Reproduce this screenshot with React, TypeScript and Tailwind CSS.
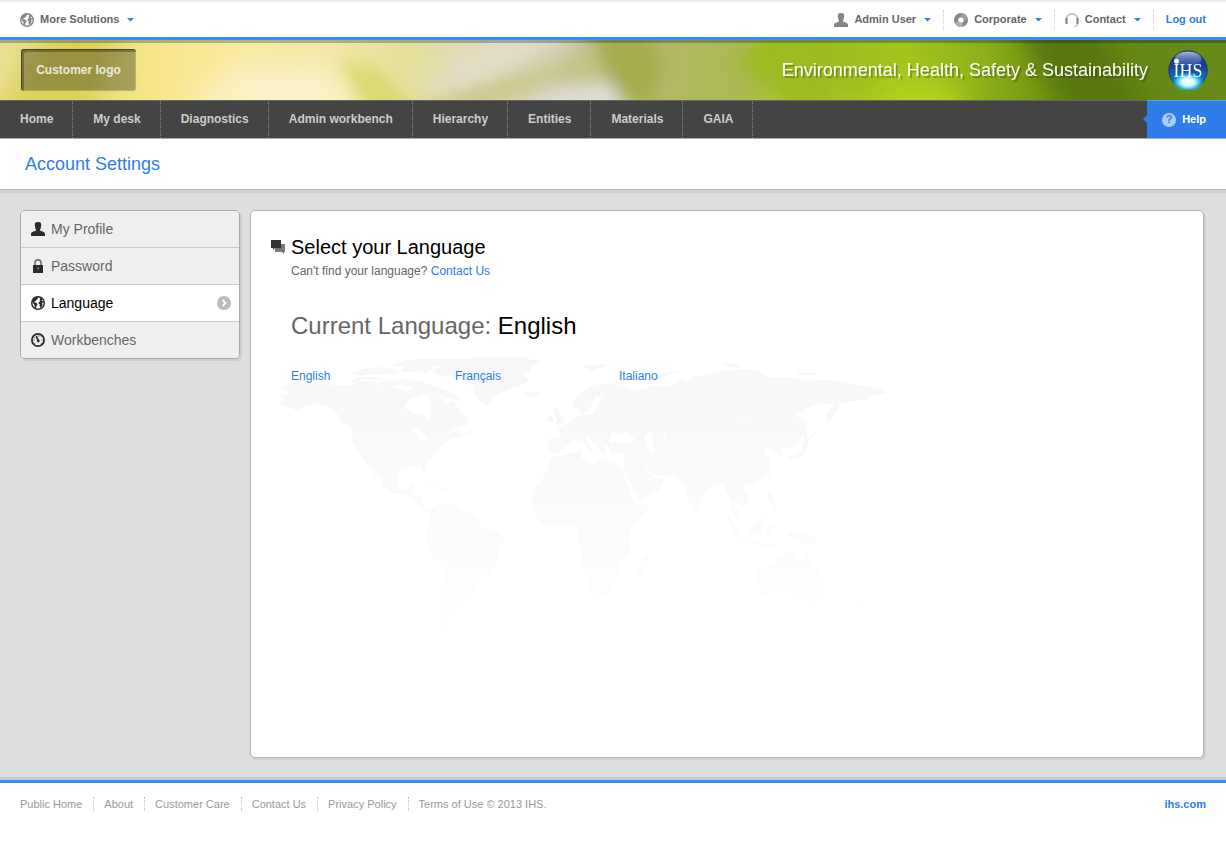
import type { ReactNode } from "react";

const NAV_ITEMS = [
  "Home",
  "My desk",
  "Diagnostics",
  "Admin workbench",
  "Hierarchy",
  "Entities",
  "Materials",
  "GAIA",
] as const;

const FOOTER_LINKS = ["Public Home", "About", "Customer Care", "Contact Us", "Privacy Policy"] as const;

const LANGUAGES = ["English", "Français", "Italiano"] as const;

function UserIcon() {
  return (
    <svg viewBox="0 0 14 14" className="size-3.5 shrink-0" fill="currentColor" aria-hidden="true">
      <path d="M4.300.7C4.900.2 5.800 0 7 0s2.100.2 2.700.7c.4.7.6 1.500.5 2.500l-.3 2C9.700 6.400 9.300 7.200 9 7.800v.8l3.800 1.500c.7.4 1.100 1 1.200 1.700V14H0v-2.200c.1-.7.5-1.300 1.200-1.700L5 8.600v-.8c-.3-.6-.7-1.400-.9-2.600l-.3-2c-.1-1 .1-1.800.5-2.500z" />
    </svg>
  );
}

function GlobeIcon() {
  return (
    <svg viewBox="0 0 14 14" className="size-3.5 shrink-0" aria-hidden="true">
      <circle cx="7" cy="7" r="6.300" fill="none" stroke="currentColor" strokeWidth="1.400" />
      <path
        fill="currentColor"
        d="M2.500 2L5.500.8l1.800.1-.9 1.300.7.800-1.700.8L4.600 5l-1.300.5.200 1 1.800.2 1.300 1.200-.6 1.500-.7.800-.1 2.400-1.600-1L3.500 9 2 7.300 1 5.600zM8 .8l2.600.6 2.300 2.400-1.600-.3-.8 1.200 1.100.5 1.500-.2.100 2-1.100-.7-1 .7.500 1.700-1.200 2.500-1 .8-.8-2 .2-1.400L7.500 7.500l.3-1.600L9.300 5l-.8-1.200.9-1z"
      />
    </svg>
  );
}

function LockIcon() {
  return (
    <svg viewBox="0 0 14 14" className="size-3.5 shrink-0" aria-hidden="true">
      <path d="M4 6.500V3.800a3 3 0 0 1 6 0v2.700" fill="none" stroke="#777" strokeWidth="1.700" />
      <path fill="currentColor" d="M2 6h10v8H2z" />
      <path fill="#aaa" d="M6.400 8.500h1.300v1.800H6.400z" />
    </svg>
  );
}

function GaugeIcon() {
  return (
    <svg viewBox="0 0 14 14" className="size-3.5 shrink-0" fill="none" stroke="currentColor" aria-hidden="true">
      <circle cx="7" cy="7" r="6.100" strokeWidth="1.800" />
      <path d="M5.300 3.200l2 4.600" strokeWidth="1.700" />
      <circle cx="7.300" cy="8" r="1.400" fill="currentColor" stroke="none" />
      <path d="M2.600 7h1.200M10.300 7h1.200M7.800 2.300v1.200M9.600 4.300l.7-.7M3.400 4.200l.7.600M10 10l.8.6M3.400 10.500l.8-.6" strokeWidth="0.900" />
    </svg>
  );
}

function DonutIcon() {
  return (
    <svg viewBox="0 0 14 14" className="size-3.5 shrink-0" fill="none" strokeWidth="4.200" aria-hidden="true">
      <circle cx="7" cy="7" r="4.900" stroke="#888" />
      <path d="M7 2.100A4.900 4.900 0 0 1 11.900 7" stroke="#a0a0a0" />
      <path d="M2.500 9A4.900 4.900 0 0 0 8.500 11.700" stroke="#b0b0b0" />
    </svg>
  );
}

function HeadsetIcon() {
  return (
    <svg viewBox="0 0 14 14" className="size-3.5 shrink-0" fill="none" aria-hidden="true">
      <path d="M1.300 7V6.500a5.700 5.700 0 0 1 11.400 0V7" stroke="#bdbdbd" strokeWidth="1.500" />
      <path d="M1.500 5v6M12.500 5v6" stroke="#858585" strokeWidth="2.200" />
      <path d="M12.500 11l-1 2.200h-2" stroke="#bdbdbd" strokeWidth="1.200" />
    </svg>
  );
}

function ChatIcon() {
  return (
    <svg viewBox="0 0 14 14" className="size-3.5 shrink-0" aria-hidden="true">
      <path fill="#777" d="M4 4h10v8h-1v2l-2.200-2H4z" />
      <path fill="#333" d="M0 0h10v8H4L2 10V8H0z" />
    </svg>
  );
}

function Caret() {
  return (
    <svg viewBox="0 0 7 4" className="h-1 w-[7px] shrink-0 fill-[#2f7de9]" aria-hidden="true">
      <path d="M0 0h7L3.500 3.500z" />
    </svg>
  );
}

/** Round corporate mark at the right end of the banner. */
function BrandLogo() {
  return (
    <svg viewBox="0 0 40 40" className="size-10 shrink-0" role="img" aria-label="IHS">
      <defs>
        <linearGradient id="orb" x1="0" y1="0" x2="0" y2="1">
          <stop offset="0" stopColor="#232d72" />
          <stop offset="0.4" stopColor="#1c3f9c" />
          <stop offset="0.65" stopColor="#0a68bc" />
          <stop offset="1" stopColor="#0c8ed2" />
        </linearGradient>
        <radialGradient id="orbGlow" cx="0.5" cy="0.5" r="0.5">
          <stop offset="0" stopColor="#fff" />
          <stop offset="0.4" stopColor="#d8faff" />
          <stop offset="0.7" stopColor="#4fd2f8" stopOpacity="0.8" />
          <stop offset="1" stopColor="#1aa6ea" stopOpacity="0" />
        </radialGradient>
        <linearGradient id="orbShine" x1="0" y1="0" x2="0" y2="1">
          <stop offset="0" stopColor="#e8f0ff" stopOpacity="0.7" />
          <stop offset="1" stopColor="#5a8be0" stopOpacity="0.2" />
        </linearGradient>
      </defs>
      <circle cx="20" cy="20" r="19.200" fill="url(#orb)" stroke="#1c2c66" strokeWidth="0.800" />
      <ellipse cx="20" cy="32" rx="16" ry="10" fill="url(#orbGlow)" />
      <ellipse cx="20" cy="9" rx="13.500" ry="7.500" fill="url(#orbShine)" />
      <circle cx="8.500" cy="11.200" r="2.500" fill="#fff" />
      <text x="5.500" y="26.500" fill="#fff" fontSize="18" fontFamily="'Liberation Serif', serif">
        IHS
      </text>
    </svg>
  );
}

/** Soft out-of-focus foliage stretched across the banner. */
function BannerArt() {
  return (
    <svg
      viewBox="0 0 1226 60"
      preserveAspectRatio="none"
      className="absolute inset-0 h-full w-full"
      aria-hidden="true"
    >
      <defs>
        <linearGradient id="leaf">
          <stop offset="0" stopColor="#e9df94" />
          <stop offset="0.06" stopColor="#e6db74" />
          <stop offset="0.13" stopColor="#f6e78c" />
          <stop offset="0.2" stopColor="#f9eb9f" />
          <stop offset="0.27" stopColor="#f2e7a8" />
          <stop offset="0.33" stopColor="#e5df9a" />
          <stop offset="0.38" stopColor="#dfdab0" />
          <stop offset="0.45" stopColor="#d3cfb0" />
          <stop offset="0.5" stopColor="#b5b77a" />
          <stop offset="0.55" stopColor="#b2b862" />
          <stop offset="0.61" stopColor="#abb950" />
          <stop offset="0.66" stopColor="#9dbb20" />
          <stop offset="0.74" stopColor="#a3c41d" />
          <stop offset="0.8" stopColor="#8db01a" />
          <stop offset="0.88" stopColor="#658913" />
          <stop offset="1" stopColor="#678b18" />
        </linearGradient>
        <filter id="haze" x="-5%" y="-100%" width="110%" height="300%">
          <feGaussianBlur stdDeviation="14" />
        </filter>
        <filter id="mist" x="-5%" y="-100%" width="110%" height="300%">
          <feGaussianBlur stdDeviation="8" />
        </filter>
      </defs>
      <rect width="1226" height="60" fill="url(#leaf)" />
      <g filter="url(#haze)">
        <path d="M60-20h60L90 80H-10z" fill="#dcd058" />
        <path d="M180 70l60-45h90l40 55z" fill="#fcf0c8" />
        <path d="M510-20h75L470 55l-60 5z" fill="#e4ddca" />
        <path d="M750 90l20-30h70l20 30z" fill="#c3ce3c" />
        <path d="M840 90l60-50h50l20 50z" fill="#b2d41c" />
        <path d="M1005-40h75l80 130h-80l-40-60z" fill="#567710" />
      </g>
      <g filter="url(#mist)">
        <path d="M340 20l36 8 40 42h-50z" fill="#d6d664" opacity="0.800" />
        <path d="M596 12l14 20-70 14-60 24h-70l60-22 70-18z" fill="#c4c27e" opacity="0.700" />
        <path d="M500 85l50-35 55-10 60 45z" fill="#dedbd2" />
        <path d="M588-30h50l24 55-16 50-20-5-26-50z" fill="#a1a940" opacity="0.750" />
        <path d="M736 25l56-60h40v110h-40l-24-34z" fill="#9dbb20" />
      </g>
    </svg>
  );
}

function WorldMap() {
  return (
    <svg
      viewBox="0 0 1980 930"
      className="pointer-events-none absolute left-[9px] top-[129px] w-[660px]"
      fill="url(#fade)"
      aria-hidden="true"
    >
      <defs>
        <linearGradient id="fade" gradientUnits="userSpaceOnUse" x1="0" y1="50" x2="0" y2="930">
          <stop offset="0" stopColor="#f7f7f7" />
          <stop offset="0.25" stopColor="#f8f8f8" />
          <stop offset="0.6" stopColor="#fbfbfb" />
          <stop offset="1" stopColor="#fff" />
        </linearGradient>
      </defs>
      {/* North America */}
      <path d="M62 142L100 128 160 132 270 136 300 126 360 146 400 140 440 154 470 132 496 152 510 136 540 150 520 170 486 162 440 184 432 204 470 222 498 228 504 246 510 222 514 190 502 172 530 166 560 190 580 180 602 214 626 240 618 258 586 262 560 280 600 270 606 282 640 272 600 294 572 296 548 316 526 340 516 356 496 376 500 408 486 392 480 378 452 376 424 384 412 400 414 436 428 450 444 446 450 434 466 432 456 460 484 468 486 494 506 508 512 514 498 516 466 486 430 466 400 460 372 440 366 422 346 396 330 374 352 418 344 412 318 370 304 348 286 326 276 304 276 270 246 246 230 220 210 202 160 192 130 200 50 240 110 208 70 198 56 186 80 178 66 168 92 160z" />
      {/* Arctic islands */}
      <path d="M270 124L300 112 350 110 390 124 440 116 490 126 540 144 590 164 602 180 560 176 520 158 480 140 420 134 370 144 310 136zM272 100L320 84 370 82 420 92 400 104 330 104 290 106zM390 76L440 60 510 55 600 56 570 72 520 82 500 98 420 96 430 80z" />
      <path fill="#fff" d="M300 116l50 4 40-6-30 10-50 2zM440 108l60-4 40 14-50 0z" />
      {/* Greenland and Iceland */}
      <path d="M520 92L570 68 600 56 700 50 790 54 848 64 806 78 812 92 790 106 806 118 790 134 750 146 708 168 684 196 656 182 640 160 638 136 600 112 540 106z" />
      <path d="M786 158l30-2 26 6-12 8-30 2zM478 424l30 2 40 20 26 4-30 0-20-14zM92 430l14 4 14 10-10 0z" />
      {/* South America */}
      <path d="M512 506L534 490 584 492 604 506 648 528 664 560 712 576 732 596 728 618 714 640 710 674 698 700 666 716 644 746 620 780 590 806 576 824 566 850 564 876 574 898 544 898 526 874 532 806 544 734 550 680 520 656 498 600 500 570 514 552z" />
      <path fill="#fff" d="M446 272l22-8 16 8-12 30 4-20 14-2 14 14-8 10-16-2-8-24-10 0z" />
      <g transform="translate(780 0)">
        {/* Europe and Asia */}
        <path d="M156 182L186 156 216 136 256 130 306 134 340 150 320 162 300 164 350 152 400 140 450 142 470 128 474 118 492 114 502 124 520 110 570 102 610 92 680 86 720 96 750 112 810 112 850 122 930 120 990 132 1070 142 1100 158 1050 168 1040 178 964 188 930 242 922 248 920 224 934 200 942 190 882 196 826 226 850 238 856 270 840 304 814 328 790 318 776 328 790 336 780 350 744 324 730 334 750 358 750 390 734 414 700 430 680 432 668 444 686 470 688 486 668 500 652 488 640 478 640 502 658 524 662 550 640 524 630 476 606 430 574 442 542 470 534 508 520 518 502 470 490 430 468 410 424 406 394 404 380 380 376 386 402 412 434 420 420 446 360 484 346 458 322 416 306 390 312 372 316 340 276 340 260 316 282 306 334 310 344 296 314 276 300 284 280 276 268 298 272 314 250 320 256 346 236 330 214 298 192 284 206 314 220 330 206 334 184 300 158 304 130 326 112 342 82 338 84 296 118 296 120 276 104 264 140 252 160 232 190 226 216 222 234 196 238 178 256 170 226 168 216 192 206 214 190 224 176 206 160 208z" />
        <path fill="#fff" d="M272 298l14-18 14 2 4 8 18-8-4 10 22 12-20 4-30-6-14 6zM372 290l14-14 14 4-8 12 8 14 2 26-14 2-10-22zM428 284l12-6-2 14-10 2zM664 248l14-10 12-14-6 16-14 8z" />
        <path d="M100 206l16 0 2 14 18 20-4 10-30 6 10-14-8-16zM76 240l18-16 8 14-10 10zM8 160l40-4 12 8-20 8-26-2zM186 78l80-6-30 12-16 8zM596 68l50 4 20 12-40-2zM826 98l70 2-20 6-40-2zM400 116l30-16 54-8-50 16-20 10z" />
        <path d="M850 232l10 20 4 40 30-16-28 26-12 40-20 12-34 10 6-12 38-20 8-30-2-30zM776 330l10-6 4 24-10 4zM744 410l6-16 6 0-6 22z" />
        {/* Africa and Madagascar */}
        <path d="M96 350l80-14 8 0 4 22 34 14 10-14 36 10 32 4 8 30 20 40 18 52 44-4-14 28-44 46-4 22 4 50-12 16-20 28-6 36-14 28-20 26-38 4-10-4-16-60-14-30 6-50-14-26-2-34-24-14-40 2-30 4-16-12-14-26-12-12-4-20 6-36 16-24 22-30z" />
        <path d="M384 640l2 20-16 54-16-2-2-20 8-30z" />
        {/* South-east Asia and Oceania */}
        <path d="M612 522l20 16 30 40 6 22-14-8-24-40zM670 600l50 6 58 12-8 6-60-8zM688 558l20-10 24-22-2 34-14 24-24-4zM740 560l30-6-14 14 6 28-8-8-8 10zM744 456l12 2 0 22 12 12 4 24-14-2-8-28-8-8zM536 510l6 2 2 12-8 2z" />
        <path d="M800 572l20 2 40 8 24 14 16 22-30-6-26-2-20-14-16-4zM708 700L716 686 756 672 778 648 798 640 826 634 828 654 846 668 854 636 860 634 868 660 888 684 910 712 914 746 896 796 868 796 844 786 834 770 818 772 800 756 770 754 730 770 720 774 714 730zM868 808l16 2-6 14-8-4zM1010 774l24 22-6 12-20 8-6-16zM984 846l36-26-16 18z" />
      </g>
    </svg>
  );
}

type AccountItemProps = { icon: ReactNode; label: string };

function AccountItem({ icon, label }: AccountItemProps) {
  return (
    <button type="button" className="flex items-center gap-1.5 text-[#666]">
      <span className="flex text-[#858585]">{icon}</span>
      {label}
      <span className="ml-0.5">
        <Caret />
      </span>
    </button>
  );
}

type SideLinkProps = { icon: ReactNode; label: string; active?: boolean };

function SideLink({ icon, label, active }: SideLinkProps) {
  return (
    <li className="border-b border-[#c9c9c9] last:border-b-0">
      <a
        href="#"
        aria-current={active ? "page" : undefined}
        className={
          active
            ? "flex h-9 items-center gap-1.5 bg-white pl-2.5 pr-2 text-black"
            : "flex h-9 items-center gap-1.5 bg-[#efefef] pl-2.5 pr-2 text-[#666]"
        }
      >
        <span className="flex text-[#2b2b2b]">{icon}</span>
        <span className="grow">{label}</span>
        {active && (
          <svg viewBox="0 0 14 14" className="size-3.5" aria-hidden="true">
            <circle cx="7" cy="7" r="7" fill="#bbb" />
            <path d="M5.500 4l3 3-3 3" fill="none" stroke="#fff" strokeWidth="1.800" />
          </svg>
        )}
      </a>
    </li>
  );
}

export default function App() {
  return (
    <div className="bg-white font-['Liberation_Sans',Arial,sans-serif] text-xs text-[#666]">
      <div className="flex h-10 items-center justify-between border-b-[3px] border-t-2 border-b-[#338fff] border-t-[#ededed] px-5 text-[11px] font-bold">
        <AccountItem icon={<GlobeIcon />} label="More Solutions" />
        <div className="flex items-center">
          <div className="flex h-5 items-center border-r border-dotted border-[#ccc] pr-3">
            <AccountItem icon={<UserIcon />} label="Admin User" />
          </div>
          <div className="flex h-5 items-center border-r border-dotted border-[#ccc] pl-2.5 pr-3">
            <AccountItem icon={<DonutIcon />} label="Corporate" />
          </div>
          <div className="flex h-5 items-center border-r border-dotted border-[#ccc] pl-2.5 pr-3">
            <AccountItem icon={<HeadsetIcon />} label="Contact" />
          </div>
          <a href="#" className="pl-3 text-[#2f7de9]">
            Log out
          </a>
        </div>
      </div>

      <header className="relative flex h-[60px] items-center justify-between overflow-hidden pl-[21px] pr-[18px]">
        <BannerArt />
        <div className="absolute inset-x-0 top-0 h-[3px] bg-black/25" />
        <div className="relative flex h-[42px] w-[115px] items-center justify-center rounded-[3px] bg-black/30 font-bold text-white/80 shadow-[inset_3px_3px_0_rgba(0,0,0,0.25),inset_1px_1px_0_rgba(0,0,0,0.4),inset_-1px_-1px_0_rgba(255,255,255,0.2)]">
          Customer logo
        </div>
        <div className="relative flex items-center gap-5">
          <span className="text-lg text-white [text-shadow:2px_2px_0_rgba(0,0,0,0.25)]">
            Environmental, Health, Safety &amp; Sustainability
          </span>
          <BrandLogo />
        </div>
      </header>

      <nav className="flex h-[39px] justify-between border-b border-t border-b-[#aaa] border-t-[#666] bg-[#444] font-bold text-[#ccc]">
        <ul className="flex">
          {NAV_ITEMS.map((item) => (
            <li key={item} className="border-r border-dotted border-[#888]">
              <a href="#" className="flex h-9 items-center pl-5 pr-[19px]">
                {item}
              </a>
            </li>
          ))}
        </ul>
        <a
          href="#"
          className="relative -mt-px flex items-center gap-1.5 border-t border-[#5a9bf5] bg-[#2f7de9] pl-[15px] pr-5 text-[11px] text-white"
        >
          <svg viewBox="0 0 4 8" className="absolute -left-1 top-3.5 h-2 w-1 fill-[#2f7de9]" aria-hidden="true">
            <path d="M4 0v8L0 4z" />
          </svg>
          <span className="flex size-3.5 items-center justify-center rounded-full bg-[#accbf6] text-[#2f7de9]">?</span>
          Help
        </a>
      </nav>

      <h1 className="flex h-[51px] items-center border-b border-[#b3b3b3] px-[25px] text-lg text-[#2f7de9]">
        Account Settings
      </h1>

      <main className="flex items-start gap-2.5 border-y-[3px] border-b-[#c9c9c9] border-t-[#d0d0d0] bg-[#dedede] pb-[19px] pl-5 pr-[22px] pt-[17px]">
        <ul className="w-[220px] shrink-0 overflow-hidden rounded-[5px] border border-[#aaa] text-sm shadow-[2px_2px_0_#cecece]">
          <SideLink icon={<UserIcon />} label="My Profile" />
          <SideLink icon={<LockIcon />} label="Password" />
          <SideLink icon={<GlobeIcon />} label="Language" active />
          <SideLink icon={<GaugeIcon />} label="Workbenches" />
        </ul>

        <section className="relative min-h-[548px] grow overflow-hidden rounded-[5px] border border-[#b3b3b3] bg-white px-5 pt-6 shadow-[2px_2px_0_#cecece]">
          <WorldMap />
          <div className="relative">
            <h2 className="flex items-center gap-1.5 text-xl leading-6 text-black">
              <ChatIcon />
              Select your Language
            </h2>
            <div className="pl-5">
              <p className="mt-1 leading-4">
                Can't find your language?{" "}
                <a href="#" className="text-[#2f7de9]">
                  Contact Us
                </a>
              </p>
              <p className="mt-8 text-2xl leading-[30px]">
                Current Language: <strong className="font-normal text-black">English</strong>
              </p>
              <ul className="mt-[27px] flex gap-1">
                {LANGUAGES.map((lang) => (
                  <li key={lang} className="w-40">
                    <a href="#" className="text-[#2f7de9]">
                      {lang}
                    </a>
                  </li>
                ))}
              </ul>
            </div>
          </div>
        </section>
      </main>

      <footer className="flex items-center justify-between border-t-[3px] border-[#338fff] px-5 pt-3.5 text-[11px] text-[#999]">
        <ul className="flex">
          {FOOTER_LINKS.map((link) => (
            <li key={link} className="mr-2.5 border-r border-dotted border-[#bbb] pr-[11px] leading-[14px]">
              <a href="#">{link}</a>
            </li>
          ))}
          <li className="leading-[14px]">Terms of Use © 2013 IHS.</li>
        </ul>
        <a href="#" className="font-bold text-[#2f7de9]">
          ihs.com
        </a>
      </footer>
    </div>
  );
}
